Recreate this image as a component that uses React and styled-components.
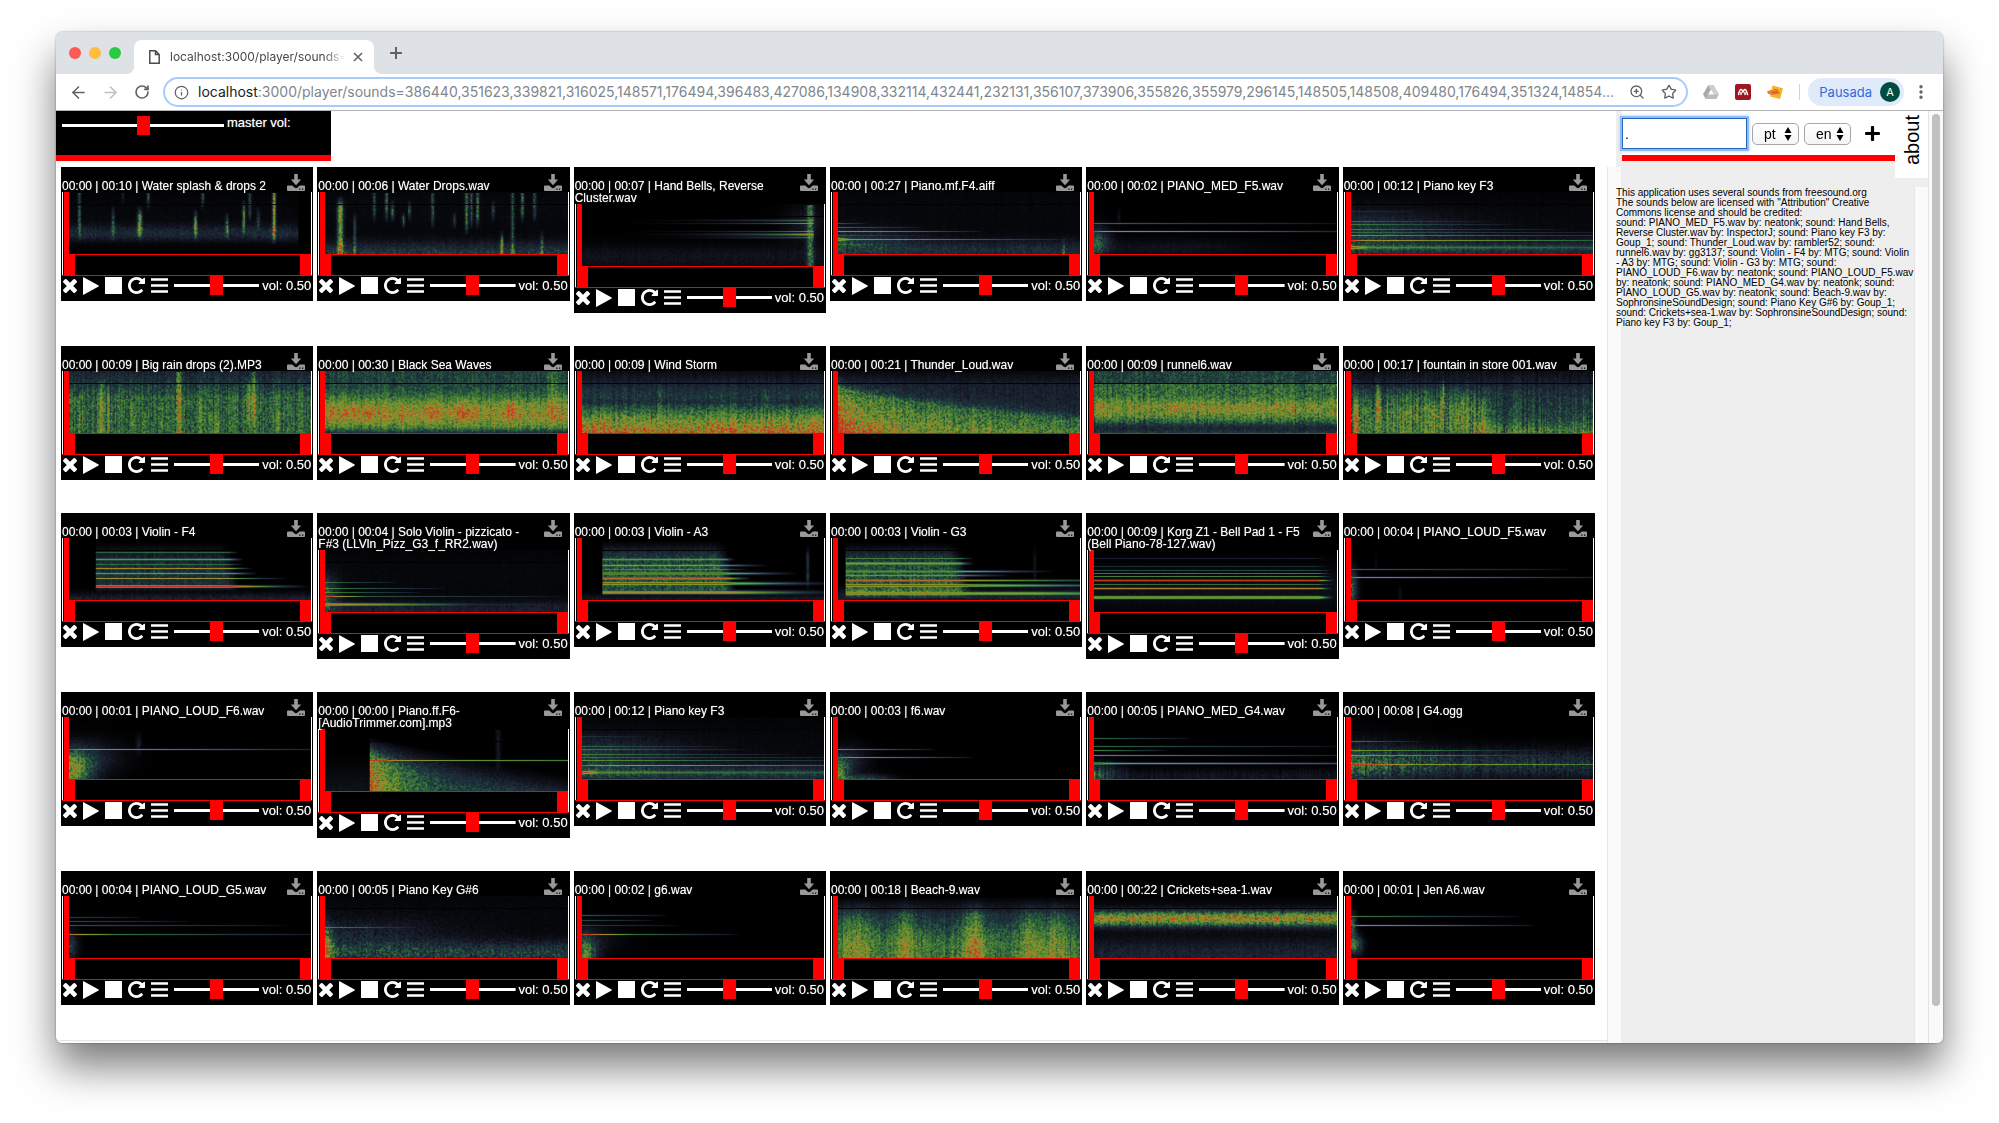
import React, { useEffect, useRef } from "react";
import styled, { createGlobalStyle } from "styled-components";
import { FaPlus } from "react-icons/fa";
import { ArrowLeft, ArrowRight, Info, RotateCw, Star, ZoomIn, EllipsisVertical } from "lucide-react";

const red = "#ff0000";
const sans = `"Liberation Sans", Helvetica, Arial, sans-serif`;
const chromeFont = `Inter, Roboto, sans-serif`;

const GlobalStyle = createGlobalStyle`
  *, *::before, *::after { box-sizing: border-box; }
  body { margin: 0; background: #fff; font-family: ${sans}; color: #000; }
  button { border: 0; padding: 0; background: none; color: inherit; font: inherit; display: flex; align-items: center; justify-content: center; cursor: pointer; }
  svg { display: block; flex: none; }
`;

/* ---------- browser window ---------- */

const Desktop = styled.div`
  padding: 32px 56px 80px;
  overflow: hidden;
`;

const Window = styled.div`
  border-radius: 7px 7px 6px 6px;
  overflow: hidden;
  background: #fff;
  box-shadow: 0 0 2px rgba(0, 0, 0, 0.45), 0 24px 42px rgba(0, 0, 0, 0.52);
`;

const TabStrip = styled.div`
  display: flex;
  align-items: center;
  height: 42px;
  padding-left: 13px;
  background: #dee1e6;
`;

const Lights = styled.div`
  display: flex;
  gap: 8px;
  margin-right: 13px;
`;

const Light = styled.button`
  && {
    width: 12px;
    height: 12px;
    border-radius: 50%;
    background: ${(p) => p.$color};
  }
`;

const Tab = styled.div`
  display: flex;
  align-items: center;
  align-self: flex-end;
  position: relative;
  width: 240px;
  height: 34px;
  padding: 0 11px 0 15px;
  border-radius: 8px 8px 0 0;
  background: #fff;
  font: 12px/16px ${chromeFont};
  color: #45494d;
  &::before, &::after {
    content: "";
    position: absolute;
    bottom: 0;
    width: 8px;
    height: 8px;
  }
  &::before { left: -8px; background: radial-gradient(circle at 0 0, #dee1e6 8px, #fff 8px); }
  &::after { right: -8px; background: radial-gradient(circle at 100% 0, #dee1e6 8px, #fff 8px); }
`;

const TabTitle = styled.span`
  flex: 1;
  min-width: 0;
  margin: 0 8px 0 10px;
  overflow: hidden;
  white-space: nowrap;
  mask-image: linear-gradient(to right, #000 88%, transparent);
`;

const NewTab = styled.button`
  && {
    margin-left: 16px;
    color: #5f6368;
  }
`;

const Toolbar = styled.div`
  display: flex;
  align-items: center;
  height: 37px;
  padding: 0 13px 0 14px;
  border-bottom: 1px solid #b4b4b4;
  color: #5f6368;
`;

const NavButton = styled.button`
  && {
    width: 16px;
    height: 16px;
    margin-right: ${(p) => (p.$last ? 13 : 16)}px;
    color: ${(p) => (p.$off ? "#bdc1c6" : "#5f6368")};
  }
`;

const AddressBar = styled.div`
  display: flex;
  align-items: center;
  flex: 1;
  min-width: 0;
  height: 30px;
  padding: 0 9px;
  border: 2px solid #a9cbfa;
  border-radius: 15px;
  gap: 9px;
`;

const Url = styled.a`
  flex: 1;
  min-width: 0;
  overflow: hidden;
  white-space: nowrap;
  text-decoration: none;
  font: 14px/20px ${chromeFont};
  color: #80868b;
  b { font-weight: 400; color: #202124; }
`;

const BarButton = styled.button`
  && {
    width: 16px;
    height: 16px;
  }
  & + & { margin-left: 7px; }
`;

const Extensions = styled.div`
  display: flex;
  align-items: center;
  gap: 16px;
  margin-left: 15px;
`;

const Divider = styled.span`
  width: 1px;
  height: 16px;
  background: #d0d3d7;
`;

const Profile = styled.button`
  && {
    height: 28px;
    margin: 0 8px;
    padding: 0 4px 0 11px;
    gap: 8px;
    border-radius: 14px;
    background: #dfeafb;
    color: #2f6bdc;
    font: 13px/16px ${chromeFont};
  }
`;

const Avatar = styled.span`
  width: 20px;
  height: 20px;
  border-radius: 50%;
  background: #004d40;
  color: #fff;
  font: 11px/20px ${chromeFont};
`;

/* ---------- page ---------- */

const Page = styled.div`
  display: flex;
  align-items: stretch;
`;

const Main = styled.main`
  display: flex;
  flex-direction: column;
  flex: 1;
  min-width: 0;
`;

const Master = styled.div`
  display: flex;
  align-items: flex-start;
  width: 275px;
  height: 50px;
  margin-bottom: 6px;
  padding: 5px 6px 0;
  border-bottom: 6px solid ${red};
  background: #000;
  color: #fff;
  font: 13px/12px ${sans};
  text-shadow: 0 0 1px rgba(255, 255, 255, 0.6);
  gap: 3px;
`;

const Range = styled.input.attrs({ type: "range" })`
  appearance: none;
  flex: ${(p) => (p.$width ? "none" : "1")};
  width: ${(p) => (p.$width ? p.$width + "px" : "auto")};
  min-width: 0;
  height: 19px;
  margin: 0;
  background: linear-gradient(#fff, #fff) center / 100% 3px no-repeat;
  &::-webkit-slider-thumb {
    appearance: none;
    width: 13px;
    height: 19px;
    background: ${red};
  }
`;

const MasterLabel = styled.label`
  padding-top: 1px;
`;

const Board = styled.div`
  flex: 1;
  padding: 0 12px 35px 5px;
`;

const Grid = styled.div`
  display: grid;
  grid-template-columns: repeat(6, minmax(0, 1fr));
  align-items: start;
  gap: 33px 4px;
`;

const HorizontalTrack = styled.div`
  height: 3px;
  border-top: 1px solid #e6e6e6;
  background: #fafafa;
`;

const Card = styled.article`
  padding: 0 1px 6px;
  background: #000;
  color: #fff;
  font: 13px/12px ${sans};
  text-shadow: 0 0 1px rgba(255, 255, 255, 0.6);
`;

const CardHead = styled.header`
  display: flex;
  align-items: flex-start;
  position: relative;
  z-index: 1;
  padding: 7px 7px 0 0;
`;

const Title = styled.h2`
  flex: 1;
  min-width: 0;
  margin: 0;
  padding: 6px 3px 0 0;
  font: 12px/12px ${sans};
`;

const Download = styled.a`
  height: 18px;
  color: #999;
`;

const Frame = styled.div`
  padding-left: 1px;
  border: solid #fff;
  border-width: 0 1px;
`;

const Spectrum = styled.div`
  height: 63px;
  border-left: 5px solid ${red};
  border-bottom: 1px solid ${red};
  canvas { display: block; width: 100%; height: 62px; }
`;

const Loop = styled.div`
  display: flex;
  justify-content: space-between;
`;

const LoopHandle = styled.button`
  && {
    width: 11px;
    height: 20px;
    background: ${red};
  }
`;

const Controls = styled.div`
  display: flex;
  align-items: center;
  gap: 6px;
  height: 20px;
  padding: 0 1px;
  border-top: 1px solid ${red};
`;

const Volume = styled.label`
  display: flex;
  align-items: center;
  flex: 1;
  min-width: 0;
  gap: 3px;
  white-space: nowrap;
`;

const Side = styled.aside`
  display: flex;
  flex-direction: column;
  width: 321px;
`;

const SideHead = styled.div`
  display: flex;
  align-items: flex-start;
  height: 56px;
  background: #eee;
`;

const Blank = styled.div`
  width: 9px;
  height: 56px;
  margin-right: 6px;
  background: #fff;
`;

const Search = styled.form`
  display: flex;
  align-items: center;
  flex: 1;
  height: 50px;
  padding-top: 1px;
  border-bottom: 6px solid ${red};
  background: #fff;
  gap: 5px;
`;

const Query = styled.input`
  width: 125px;
  height: 31px;
  padding: 0 2px;
  border: 1px solid #2864b8;
  outline: 0;
  box-shadow: 0 0 0 2px #8fbdf3, 0 0 3px 2px #a9cbfa;
  font: 14px/20px ${sans};
`;

const Picker = styled.span`
  position: relative;
  height: 22px;
  svg { position: absolute; right: 7px; top: 4px; pointer-events: none; }
`;

const Select = styled.select`
  appearance: none;
  width: 47px;
  height: 22px;
  padding: 0 0 0 11px;
  border: 1px solid #a6a6a6;
  border-radius: 5px;
  background: linear-gradient(#fff, #f5f5f5);
  color: #000;
  font: 14px/20px ${sans};
`;

const Add = styled.button`
  && { margin-left: 8px; }
`;

const About = styled.button`
  && {
    position: relative;
    z-index: 1;
    align-items: center;
    justify-content: flex-end;
    width: 33px;
    height: 67px;
    padding-bottom: 4px;
    background: #fff;
    writing-mode: vertical-rl;
    transform: rotate(180deg);
    font: 20px/24px ${sans};
  }
`;

const SideBody = styled.div`
  display: flex;
  flex: 1;
  background: #eee;
`;

const Track = styled.div`
  flex: none;
  width: 14px;
  border-left: 1px solid #e6e6e6;
  background: #fafafa;
`;

const Credits = styled.section`
  display: flex;
  flex: 1;
  min-width: 0;
  margin-top: 20px;
`;

const CreditText = styled.div`
  flex: 1;
  min-width: 0;
  margin-left: -5px;
  padding-top: 1px;
  font: 10px/10px ${sans};
  p { margin: 0; }
`;

const PageScroll = styled.div`
  width: 15px;
  padding: 3px 3px 0 2px;
  border-left: 1px solid #e2e2e2;
  background: #fafafa;
`;

const ScrollThumb = styled.div`
  width: 8px;
  height: 96%;
  margin: 0 auto;
  border-radius: 4px;
  background: #c1c1c1;
`;

/* ---------- icons ---------- */

const Glyph = ({ box, path, w, h }) => (
  <svg width={w} height={h} viewBox={box} fill="currentColor" aria-hidden="true">
    <path d={path} />
  </svg>
);
const CloseIcon = () => (
  <Glyph w={14} h={14} box="302 366 1188 1188" path="M1490 1322q0 40-28 68l-136 136q-28 28-68 28t-68-28l-294-294-294 294q-28 28-68 28t-68-28l-136-136q-28-28-28-68t28-68l294-294-294-294q-28-28-28-68t28-68l136-136q28-28 68-28t68 28l294 294 294-294q28-28 68-28t68 28l136 136q28 28 28 68t-28 68l-294 294 294 294q28 28 28 68z" />
);
const PlayIcon = () => <Glyph w={16} h={18} box="0 0 16 18" path="M0 .6Q0 0 .6.3L15.6 8.6Q16 9 15.6 9.400L.6 17.700Q0 18 0 17.400z" />;
const StopIcon = () => <Glyph w={17} h={17} box="0 0 17 17" path="M0 0h17v17H0z" />;
const RepeatIcon = () => (
  <Glyph w={17} h={17} box="128 128 1536 1536" path="M1664 256v448q0 26-19 45t-45 19h-448q-42 0-59-40-17-39 14-69l138-138q-148-137-349-137-104 0-198.500 40.500t-163.500 109.500-109.500 163.500-40.500 198.500 40.500 198.500 109.500 163.500 163.500 109.500 198.500 40.500q119 0 225-52t179-147q7-10 23-12 15 0 25 9l137 138q9 8 9.500 20.500t-7.500 22.500q-109 132-264 204.500t-327 72.500q-156 0-298-61t-245-164-164-245-61-298 61-298 164-245 245-164 298-61q147 0 284.500 55.500t244.500 156.500l130-129q29-31 70-14 39 17 39 59z" />
);
const BarsIcon = () => <Glyph w={17} h={15} box="0 0 17 15" path="M0 .2h17v2.500H0zM0 6.200h17v2.600H0zM0 12.300h17v2.500H0z" />;
const DownloadIcon = () => (
  <svg width="18" height="17" viewBox="0 0 18 17" fill="currentColor" aria-hidden="true">
    <path fillRule="evenodd" d="M7.200 0h3.600v5.500h3.400L9 11.200 3.800 5.500h3.400zM1 11.500h4.200l2.300 2.100q1.500 1.200 3 0l2.300-2.100H17q1 0 1 1V16q0 1-1 1H1q-1 0-1-1v-3.500q0-1 1-1zM12.200 14.500v1.300h1.300v-1.300zM15 14.500v1.300h1.300v-1.300z" />
  </svg>
);

const PageIcon = () => (
  <svg width="11" height="14" viewBox="0 0 11 14" fill="none" stroke="#4a4d51" strokeWidth="1.500" aria-hidden="true">
    <path d="M.8.8h5.700l3.700 3.700v8.700H.8zM6.500.8v3.700h3.700" />
  </svg>
);
const DriveIcon = () => (
  <svg width="16" height="14" viewBox="0 0 16 14" aria-hidden="true">
    <path d="M5.300 0h5.400L16 9.200h-5.400z" fill="#cfcfcf" />
    <path d="M5.300 0 8 4.700 2.700 14 0 9.200z" fill="#a9a9a9" />
    <path d="M5.400 9.200H16L13.300 14H2.700z" fill="#bcbcbc" />
    <path d="M8 4.700l2.600 4.500H5.400z" fill="#fff" />
  </svg>
);
const ReaderIcon = () => (
  <svg width="16" height="16" viewBox="0 0 16 16" aria-hidden="true">
    <rect width="16" height="16" rx="2" fill="#9d1620" />
    <path d="M3.500 10.500Q4.600 5.500 6 5.500T8 8.600Q8.700 5.500 10 5.500t2.500 5M6 10.500V8.500M10 10.500V8.500" fill="none" stroke="#fff" strokeWidth="1.500" strokeLinecap="round" />
  </svg>
);
const TagIcon = () => (
  <svg width="16" height="15" viewBox="0 0 16 15" aria-hidden="true">
    <path d="M5.500.5 16 3.200 13 14 3 11.500z" fill="#f6b22d" />
    <path d="M0 6.200 4 5l8 .8 1 3.200-8 1-4-1.200z" fill="#e87f2b" />
    <path d="M5 7.500h6M7 4.500l4 .8" stroke="#c55a1a" strokeWidth="1" />
  </svg>
);
const Arrows = () => (
  <svg width="8" height="14" viewBox="0 0 8 14" aria-hidden="true">
    <path d="M4 0l3.500 6h-7zM4 14L.5 8h7z" />
  </svg>
);

/* ---------- spectrograms ---------- */

const W = 190;
const H = 62;
const palette = [
  [0, 0, 0, 0],
  [0.2, 26, 31, 46],
  [0.34, 30, 56, 62],
  [0.48, 46, 106, 60],
  [0.64, 98, 142, 48],
  [0.78, 150, 146, 44],
  [0.9, 176, 108, 38],
  [1, 196, 56, 30],
];

const colour = (v) => {
  const t = Math.min(Math.max(v, 0), 1);
  let i = 1;
  while (t > palette[i][0]) i++;
  const a = palette[i - 1];
  const b = palette[i];
  const k = (t - a[0]) / (b[0] - a[0]);
  return [1, 2, 3].map((n) => a[n] + (b[n] - a[n]) * k);
};

const random = (seed) => {
  let s = seed * 7919 + 17;
  return () => {
    s = (s * 1664525 + 1013904223) % 4294967296;
    return s / 4294967296;
  };
};

const bell = (d, w) => Math.exp(-(d / w) * (d / w));

// Tones sit on a whole row, so that each keeps its full brightness.
const row = (y, ly) => y - Math.round(ly * H) / H;

/*
  lines:   [y, level, length, start, thickness]  tones fading to the right
  rising:  [y, level, end, thickness]            tones growing to the right
  steady:  [y, level, from, to, tail, thickness] held tones with a short tail
  bands:   [y, height, level, x, width]          clouds of noise
  strikes: [x, level, top, bottom, width]        vertical clicks
*/
const level = (s, x, y) => {
  let tone = 0;
  let noise = 0;
  for (const [ly, a, len, x0 = 0, th = 0.012] of s.lines || []) {
    if (x >= x0 && x < x0 + len) tone = Math.max(tone, a * Math.pow(1 - (x - x0) / len, 0.55) * bell(row(y, ly), th));
  }
  for (const [ly, a, end, th = 0.012] of s.rising || []) {
    if (x < end) tone = Math.max(tone, a * Math.pow(x / end, 2.5) * bell(row(y, ly), th));
  }
  for (const [ly, a, from, to, tail, th = 0.014] of s.steady || []) {
    if (x < from) continue;
    const f = x < to ? 1 : Math.max(0, 1 - (x - to) / tail);
    tone = Math.max(tone, a * f * bell(row(y, ly), th));
  }
  for (const [by, bh, a, bx, bw] of s.bands || []) {
    noise += a * bell(y - by, bh) * (bw ? bell(x - bx, bw) : 1);
  }
  for (const [cx, a, y0, y1, w = 0.006] of s.strikes || []) {
    const top = y0 === 0 ? 1 : Math.min(1, (y - y0) / 0.2);
    const bottom = y1 === 1 ? 1 : Math.min(1, (y1 - y) / 0.2);
    if (y > y0 && y < y1) noise += a * 1.1 * bell(x - cx, w) * top * bottom;
  }
  if (s.shape) noise += s.shape(x, y);
  return [tone, noise];
};

const paint = (ctx, s, seed) => {
  const rnd = random(seed);
  const columns = Array.from({ length: W }, () => rnd() - 0.5);
  const raw = Array.from({ length: (W + 1) * (H + 2) }, () => rnd());
  const grain = s.grain ?? 0.45;
  const streak = s.streak ?? 0.25;
  const image = ctx.createImageData(W, H);
  for (let j = 0; j < H; j++) {
    for (let i = 0; i < W; i++) {
      const x = i / W;
      const y = j / H;
      const [tone, noise] = level(s, x, y);
      const n = j * (W + 1) + i;
      const speck = raw[n] * 0.6 + raw[n + W + 1] * 0.4 - 0.53;
      const rough = noise * (1 + grain * speck * 1.6 + streak * columns[i]);
      let v = Math.max(tone, rough) + Math.min(tone, rough) * 0.3;
      if (j === 12) v *= 0.12;
      if (s.end && x > s.end) v = 0;
      const [r, g, b] = colour(v);
      const o = (j * W + i) * 4;
      image.data[o] = r;
      image.data[o + 1] = g;
      image.data[o + 2] = b;
      image.data[o + 3] = 255;
    }
  }
  ctx.putImageData(image, 0, 0);
};

const block = (from, to, top, bottom, a) => (x, y) => {
  const edge = Math.min(1, Math.max(0, (to + (y - top) * 0.06 - x) / 0.05));
  const head = Math.min(1, Math.max(0, (y - top) * 5));
  const foot = Math.min(1, Math.max(0, (bottom - y) * 10));
  return x > from ? a * edge * head * foot * Math.min(1, 0.35 + (y - top) * 1.600) : 0;
};

const pianoF3 = {
  lines: [[0.3, 0.26, 0.3], [0.46, 0.4, 0.6], [0.51, 0.45, 0.7], [0.59, 0.45, 0.9], [0.65, 0.4, 1.2], [0.69, 0.55, 1.3], [0.77, 0.95, 0.12], [0.77, 0.72, 1.5], [0.89, 0.95, 0.1, 0, 0.03], [0.89, 0.5, 2, 0, 0.03]],
  bands: [[0.92, 0.17, 0.26], [0.6, 0.3, 0.25, 0, 0.4], [0.5, 0.6, 0.05]],
};

const sounds = [
  ["00:10", "Water splash & drops 2", { end: 0.945, bands: [[0.66, 0.13, 0.22], [0.35, 0.4, 0.05]], strikes: [[0.04, 0.35, 0, 0.8], [0.18, 0.35, 0.2, 0.8], [0.22, 0.2, 0, 0.2], [0.29, 0.6, 0.2, 0.8, 0.009], [0.325, 0.35, 0, 0.3], [0.52, 0.6, 0.25, 0.8], [0.55, 0.4, 0, 0.3], [0.65, 0.4, 0.3, 0.8], [0.72, 0.5, 0.1, 0.7], [0.745, 0.3, 0, 0.5], [0.78, 0.3, 0.2, 0.7], [0.845, 0.7, 0, 0.85]] }],
  ["00:06", "Water Drops.wav", { bands: [[1, 0.2, 0.32], [0.3, 0.5, 0.06]], strikes: [[0.06, 0.6, 0.05, 1, 0.012], [0.12, 0.3, 0.3, 1], [0.2, 0.3, 0, 0.5], [0.25, 0.4, 0, 0.5], [0.275, 0.5, 0.1, 0.5], [0.32, 0.55, 0.3, 0.6], [0.345, 0.4, 0.1, 0.5], [0.44, 0.35, 0, 0.6], [0.53, 0.45, 0.3, 0.6], [0.58, 0.5, 0, 0.7], [0.6, 0.3, 0, 0.6], [0.625, 0.45, 0, 0.6], [0.69, 0.35, 0.1, 0.5], [0.725, 0.5, 0.6, 1], [0.77, 0.3, 0, 1], [0.81, 0.45, 0, 0.5], [0.86, 0.35, 0, 0.5], [0.89, 0.3, 0.6, 1]] }],
  ["00:07", "Hand Bells, Reverse Cluster.wav", { rising: [[0.25, 0.5, 0.957, 0.02], [0.31, 0.68, 0.957], [0.44, 0.6, 0.957], [0.49, 0.72, 0.957, 0.025], [0.54, 0.45, 0.957, 0.02]], strikes: [[0.94, 0.4, 0, 1, 0.014]], bands: [[0.85, 0.2, 0.12], [0.3, 0.3, 0.14, 0.92, 0.1]] }],
  ["00:27", "Piano.mf.F4.aiff", { lines: [[0.5, 0.4, 0.12], [0.56, 0.45, 0.35], [0.63, 0.7, 0.6], [0.7, 0.35, 0.4], [0.765, 0.9, 0.06, 0, 0.03], [0.765, 0.68, 0.98], [0.84, 0.35, 0.3]], bands: [[0.95, 0.18, 0.26], [0.75, 0.2, 0.2, 0, 0.3], [0.3, 0.6, 0.05]], strikes: [[0.93, 0.3, 0.7, 1, 0.004]] }],
  ["00:02", "PIANO_MED_F5.wav", { lines: [[0.5, 0.46, 1.05], [0.625, 0.95, 0.1], [0.625, 0.76, 1.15]], bands: [[0.8, 0.25, 0.42, 0, 0.06], [0.9, 0.15, 0.12, 0.3, 0.4]], strikes: [[0.1, 0.12, 0.2, 0.6]] }],
  ["00:12", "Piano key F3", pianoF3],

  ["00:09", "Big rain drops (2).MP3", { shape: (x, y) => (y < 0.4 ? 0.22 + y * 0.5 : 0.46), streak: 0.4, strikes: [[0.04, 0.12, 0.3, 1], [0.13, 0.24, 0.1, 1, 0.008], [0.16, 0.2, 0.2, 1], [0.26, 0.15, 0.4, 1], [0.31, 0.16, 0.5, 1], [0.38, 0.15, 0.4, 1], [0.45, 0.32, 0, 1, 0.01], [0.54, 0.12, 0.3, 1], [0.6, 0.12, 0.6, 1, 0.02], [0.74, 0.24, 0.1, 0.9], [0.76, 0.28, 0, 0.9], [0.86, 0.12, 0.5, 1]] }],
  ["00:30", "Black Sea Waves", { shape: (x, y) => 0.36 + 0.44 * bell(y - 0.68, 0.27) - 0.2 * Math.max(0, y - 0.9) / 0.1, grain: 0.35, strikes: [[0.02, 0.12, 0.4, 0.9, 0.02], [0.11, 0.12, 0.45, 0.9, 0.02], [0.18, 0.14, 0.45, 0.9, 0.02], [0.43, 0.1, 0.4, 0.85, 0.03], [0.57, 0.15, 0.4, 0.9, 0.03], [0.76, 0.14, 0.4, 0.9, 0.02], [0.94, 0.14, 0, 0.95, 0.025]] }],
  ["00:09", "Wind Storm", { shape: (x, y) => 0.08 + 0.16 * Math.min(1, y * 4) + 0.68 * Math.pow(Math.max(0, (y - 0.5) / 0.5), 0.8) + 0.08 * bell(y - 0.4, 0.12), streak: 0.3, grain: 0.4, strikes: [[0.32, 0.12, 0.1, 0.8], [0.76, 0.15, 0.2, 0.7], [0.42, 0.1, 0.3, 0.6]] }],
  ["00:21", "Thunder_Loud.wav", { shape: (x, y) => { const edge = 0.22 + 0.56 * Math.pow(x, 0.62); const d = y - edge; return d < 0 ? 0.2 * Math.min(1, y * 3 + 0.3) + 0.28 * Math.exp(d / 0.09) : 0.48 + d * 0.5 + 0.3 * Math.exp(-x * 12) * y; }, grain: 0.45 }],
  ["00:09", "runnel6.wav", { shape: (x, y) => (y < 0.2 ? 0.36 : 0.48) + 0.25 * bell(y - 0.6, 0.15) - 0.24 * bell(y - 0.92, 0.1), grain: 0.42 }],
  ["00:17", "fountain in store 001.wav", { shape: (x, y) => { const wet = 0.35 + 0.65 * Math.min(1, Math.max(0, (0.6 - x) / 0.1)); return 0.1 + 0.16 * Math.min(1, y * 3) + wet * 0.3 * Math.min(1, Math.max(0, y - 0.15) * 2) + (x > 0.5 ? 0.22 * Math.max(0, y - 0.72) / 0.28 : 0); }, streak: 0.5, strikes: [[0.02, 0.2, 0.4, 1, 0.01], [0.11, 0.3, 0.1, 0.9], [0.27, 0.15, 0.3, 0.9], [0.34, 0.22, 0.4, 1], [0.38, 0.28, 0.1, 0.9], [0.46, 0.18, 0.3, 1], [0.54, 0.2, 0.4, 1]] }],

  ["00:03", "Violin - F4", { steady: [[0.22, 0.42, 0.11, 0.66, 0.04], [0.34, 0.6, 0.11, 0.66, 0.06, 0.02], [0.42, 0.4, 0.11, 0.66, 0.06], [0.48, 0.74, 0.11, 0.66, 0.1], [0.57, 0.6, 0.11, 0.68, 0.1, 0.018], [0.64, 0.7, 0.11, 0.66, 0.25, 0.012], [0.77, 1, 0.11, 0.65, 0.35, 0.02]], shape: block(0.11, 0.66, 0.05, 0.86, 0.28), bands: [[1, 0.12, 0.22]] }],
  ["00:04", "Solo Violin - pizzicato - F#3 (LLVln_Pizz_G3_f_RR2.wav)", { lines: [[0.52, 0.45, 0.3], [0.61, 0.5, 0.5], [0.67, 0.5, 0.4], [0.74, 0.9, 0.22], [0.74, 0.45, 1], [0.87, 0.8, 0.66, 0, 0.026], [0.87, 0.3, 1.2, 0, 0.02]], bands: [[0.7, 0.3, 0.4, 0, 0.05], [1, 0.18, 0.2], [0.4, 0.5, 0.05]] }],
  ["00:03", "Violin - A3", { steady: [[0.34, 0.56, 0.08, 0.59, 0.04, 0.022], [0.44, 0.62, 0.08, 0.59, 0.18, 0.018], [0.5, 0.45, 0.08, 0.59, 0.1], [0.57, 0.85, 0.08, 0.59, 0.3, 0.02], [0.65, 0.8, 0.08, 0.6, 0.1, 0.02], [0.73, 0.97, 0.08, 0.56, 0.5, 0.024], [0.87, 0.74, 0.08, 0.65, 0.45, 0.032]], shape: block(0.08, 0.59, 0.03, 0.92, 0.4), strikes: [[0.93, 0.3, 0.1, 0.85]], bands: [[1, 0.1, 0.16]] }],
  ["00:03", "Violin - G3", { steady: [[0.33, 0.45, 0.03, 0.51, 0.05], [0.41, 0.68, 0.03, 0.5, 0.06, 0.024], [0.54, 0.82, 0.03, 0.5, 0.4, 0.018], [0.6, 0.55, 0.03, 0.52, 0.2, 0.018], [0.68, 0.78, 0.03, 0.52, 0.9, 0.018], [0.76, 0.97, 0.03, 0.5, 0.9, 0.024], [0.89, 0.72, 0.03, 0.8, 0.9, 0.032]], shape: block(0.03, 0.5, 0.06, 0.97, 0.4), bands: [[0.95, 0.15, 0.2]], strikes: [[0.81, 0.12, 0.1, 0.8]] }],
  ["00:09", "Korg Z1 - Bell Pad 1 - F5 (Bell Piano-78-127.wav)", { steady: [[0.13, 0.18, 0, 0.9, 0.06, 0.01], [0.25, 0.26, 0, 0.9, 0.06, 0.01], [0.33, 0.38, 0, 0.92, 0.06, 0.01], [0.37, 0.5, 0, 0.92, 0.06, 0.01], [0.42, 0.54, 0, 0.92, 0.06, 0.01], [0.49, 0.97, 0, 0.92, 0.07, 0.014], [0.55, 0.46, 0, 0.92, 0.06, 0.012], [0.62, 0.84, 0, 0.92, 0.06, 0.016], [0.755, 0.86, 0, 0.92, 0.07, 0.026]], bands: [[0.6, 0.35, 0.1]] }],
  ["00:04", "PIANO_LOUD_F5.wav", { lines: [[0.5, 0.45, 0.9], [0.625, 0.9, 0.1], [0.625, 0.7, 1.1]], bands: [[0.8, 0.3, 0.45, 0, 0.025]], strikes: [[0.1, 0.08, 0.2, 0.6], [0.2, 0.1, 0.7, 1]] }],

  ["00:01", "PIANO_LOUD_F6.wav", { lines: [[0.51, 0.95, 0.15], [0.51, 0.72, 1.1]], bands: [[0.85, 0.34, 0.72, 0, 0.09], [0.65, 0.3, 0.16, 0.12, 0.12]], strikes: [[0.285, 0.15, 0.2, 0.65, 0.01]] }],
  ["00:00", "Piano.ff.F6-[AudioTrimmer.com].mp3", { lines: [[0.5, 0.95, 0.3, 0.18], [0.5, 0.72, 2, 0.18]], shape: (x, y) => { if (x < 0.18) return y > 0.4 ? 0.2 * (y - 0.4) : 0; const d = x - 0.18; return (0.66 * Math.exp(-d * 6) + 0.3 * y) * Math.max(0, Math.min(1, (y - 0.12 - d * 0.75) * 2.5)); }, strikes: [[0.71, 0.14, 0, 0.7, 0.01]], streak: 0.1 }],
  ["00:12", "Piano key F3", pianoF3],
  ["00:03", "f6.wav", { lines: [[0.51, 0.6, 0.4], [0.645, 0.95, 0.12], [0.645, 0.7, 0.56]], bands: [[0.92, 0.28, 0.58, 0, 0.045], [0.7, 0.25, 0.18, 0.05, 0.08], [1, 0.08, 0.35, 0.12, 0.1]] }],
  ["00:05", "PIANO_MED_G4.wav", { lines: [[0.34, 0.46, 0.4], [0.47, 0.45, 1.05], [0.54, 0.55, 0.3], [0.61, 0.62, 1.1], [0.745, 1, 0.2, 0, 0.018], [0.745, 0.74, 1.5, 0, 0.016]], bands: [[0.9, 0.18, 0.36, 0, 0.09], [0.95, 0.12, 0.12]], streak: 0.7 }],
  ["00:08", "G4.ogg", { lines: [[0.38, 0.46, 0.3], [0.54, 0.6, 0.8], [0.62, 0.62, 0.85], [0.75, 0.9, 0.5], [0.75, 0.68, 2]], bands: [[0.75, 0.24, 0.28], [0.75, 0.4, 0.22, 0, 0.3]], streak: 0.5, grain: 0.6 }],

  ["00:04", "PIANO_LOUD_G5.wav", { lines: [[0.34, 0.34, 0.3], [0.4, 0.38, 0.5], [0.475, 0.42, 0.9], [0.61, 0.86, 0.3], [0.61, 0.55, 1.1]], bands: [[0.8, 0.25, 0.32, 0, 0.035]] }],
  ["00:05", "Piano Key G#6", { lines: [[0.5, 0.5, 0.4]], bands: [[0.85, 0.35, 0.62, 0, 0.025], [0.92, 0.2, 0.34], [0.6, 0.25, 0.16, 0.1, 0.4], [0.3, 0.5, 0.05]], grain: 0.6 }],
  ["00:02", "g6.wav", { lines: [[0.3, 0.42, 0.35], [0.39, 0.38, 0.3], [0.47, 0.34, 0.4], [0.61, 0.95, 0.3], [0.61, 0.6, 0.65]], bands: [[0.95, 0.28, 0.58, 0, 0.055], [0.7, 0.25, 0.16, 0, 0.14]] }],
  ["00:18", "Beach-9.wav", { shape: (x, y) => { const lobes = 0.28 * bell(x - 0.07, 0.07) + 0.26 * bell(x - 0.28, 0.05) + 0.4 * bell(x - 0.56, 0.045) + 0.26 * bell(x - 0.79, 0.05) + 0.24 * bell(x - 0.9, 0.05); return Math.min(1, y * 3.500) * (0.22 + lobes * (0.4 + 0.6 * y) + 0.28 * Math.min(1, Math.max(0, y - 0.2) * 1.800)); }, grain: 0.4 }],
  ["00:22", "Crickets+sea-1.wav", { bands: [[0.36, 0.12, 0.7], [0.3, 0.2, 0.1], [0.95, 0.3, 0.22]] }],
  ["00:01", "Jen A6.wav", { lines: [[0.33, 0.52, 0.7], [0.46, 0.95, 0.15], [0.46, 0.72, 0.76]], bands: [[0.45, 0.2, 0.45, 0, 0.02], [0.78, 0.16, 0.56, 0.01, 0.035]] }],
];

const credits =
  "sound: PIANO_MED_F5.wav by: neatonk; sound: Hand Bells, Reverse Cluster.wav by: InspectorJ; sound: Piano key F3 by: Goup_1; sound: Thunder_Loud.wav by: rambler52; sound: runnel6.wav by: gg3137; sound: Violin - F4 by: MTG; sound: Violin - A3 by: MTG; sound: Violin - G3 by: MTG; sound: PIANO_LOUD_F6.wav by: neatonk; sound: PIANO_LOUD_F5.wav by: neatonk; sound: PIANO_MED_G4.wav by: neatonk; sound: PIANO_LOUD_G5.wav by: neatonk; sound: Beach-9.wav by: SophronsineSoundDesign; sound: Piano Key G#6 by: Goup_1; sound: Crickets+sea-1.wav by: SophronsineSoundDesign; sound: Piano key F3 by: Goup_1;";

const ids = "386440,351623,339821,316025,148571,176494,396483,427086,134908,332114,432441,232131,356107,373906,355826,355979,296145,148505,148508,409480,176494,351324,14854...";

function Spectrogram({ spec, seed }) {
  const ref = useRef(null);
  useEffect(() => {
    paint(ref.current.getContext("2d"), spec, seed);
  }, [spec, seed]);
  return <canvas ref={ref} width={W} height={H} />;
}

function Player({ length, name, spec, index }) {
  return (
    <Card>
      <CardHead>
        <Title>00:00 | {length} | {name}</Title>
        <Download href="#download" aria-label={"Download " + name}>
          <DownloadIcon />
        </Download>
      </CardHead>
      <Frame>
        <Spectrum>
          <Spectrogram spec={spec} seed={index + 1} />
        </Spectrum>
        <Loop>
          <LoopHandle aria-label="Loop start" />
          <LoopHandle aria-label="Loop end" />
        </Loop>
      </Frame>
      <Controls>
        <button aria-label="Remove"><CloseIcon /></button>
        <button aria-label="Play"><PlayIcon /></button>
        <button aria-label="Stop"><StopIcon /></button>
        <button aria-label="Repeat"><RepeatIcon /></button>
        <button aria-label="Options"><BarsIcon /></button>
        <Volume>
          <Range min="0" max="1" step="0.01" defaultValue="0.5" />
          vol: 0.50
        </Volume>
      </Controls>
    </Card>
  );
}

function Chrome() {
  return (
    <>
      <TabStrip>
        <Lights>
          <Light $color="#fc5b57" aria-label="Close window" />
          <Light $color="#ffbd3e" aria-label="Minimise" />
          <Light $color="#2acb42" aria-label="Zoom window" />
        </Lights>
        <Tab>
          <PageIcon />
          <TabTitle>localhost:3000/player/sounds=386440</TabTitle>
          <button aria-label="Close tab">
            <svg width="10" height="10" viewBox="0 0 10 10" stroke="#5f6368" strokeWidth="1.600"><path d="M1 1l8 8M9 1L1 9" /></svg>
          </button>
        </Tab>
        <NewTab aria-label="New tab">
          <svg width="12" height="12" viewBox="0 0 12 12" stroke="currentColor" strokeWidth="2"><path d="M6 0v12M0 6h12" /></svg>
        </NewTab>
      </TabStrip>
      <Toolbar>
        <NavButton aria-label="Back"><ArrowLeft size={19} /></NavButton>
        <NavButton $off aria-label="Forward"><ArrowRight size={19} /></NavButton>
        <NavButton $last aria-label="Reload"><RotateCw size={16} strokeWidth={2.500} /></NavButton>
        <AddressBar>
          <Info size={15} />
          <Url href="#address"><b>localhost</b>:3000/player/sounds={ids}</Url>
          <BarButton aria-label="Page zoom"><ZoomIn size={16} /></BarButton>
          <BarButton aria-label="Bookmark"><Star size={16} /></BarButton>
        </AddressBar>
        <Extensions>
          <button aria-label="Drive"><DriveIcon /></button>
          <button aria-label="Reader"><ReaderIcon /></button>
          <button aria-label="Tags"><TagIcon /></button>
          <Divider />
        </Extensions>
        <Profile>Pausada <Avatar>A</Avatar></Profile>
        <button aria-label="Menu"><EllipsisVertical size={18} strokeWidth={2.500} /></button>
      </Toolbar>
    </>
  );
}

export default function App() {
  return (
    <Desktop>
      <GlobalStyle />
      <Window>
        <Chrome />
        <Page>
          <Main>
            <Master>
              <Range id="master" $width={162} defaultValue="50" />
              <MasterLabel htmlFor="master">master vol:</MasterLabel>
            </Master>
            <Board>
              <Grid>
                {sounds.map(([length, name, spec], i) => (
                  <Player key={i} index={i} length={length} name={name} spec={spec} />
                ))}
              </Grid>
            </Board>
            <HorizontalTrack />
          </Main>
          <Side>
            <SideHead>
              <Blank />
              <Search>
                <Query aria-label="Search sounds" defaultValue="." autoFocus />
                <Picker>
                  <Select aria-label="From language" defaultValue="pt"><option>pt</option><option>en</option></Select>
                  <Arrows />
                </Picker>
                <Picker>
                  <Select aria-label="To language" defaultValue="en"><option>en</option><option>pt</option></Select>
                  <Arrows />
                </Picker>
                <Add type="button" aria-label="Add"><FaPlus size={17} /></Add>
              </Search>
              <About>about</About>
            </SideHead>
            <SideBody>
              <Track />
              <Credits>
                <CreditText>
                  <p>This application uses several sounds from freesound.org</p>
                  <p>The sounds below are licensed with "Attribution" Creative Commons license and should be credited:</p>
                  <p>{credits}</p>
                </CreditText>
                <Track />
              </Credits>
            </SideBody>
          </Side>
          <PageScroll><ScrollThumb /></PageScroll>
        </Page>
      </Window>
    </Desktop>
  );
}
